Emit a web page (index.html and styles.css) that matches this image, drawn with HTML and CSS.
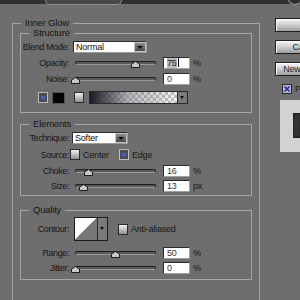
FILE: index.html
```html
<!DOCTYPE html>
<html lang="en">
<head>
    <meta charset="UTF-8">
    <title>Layer Style - Inner Glow</title>
    <link rel="stylesheet" href="styles.css">
</head>
<body>
    <div class="topbar"><span class="tab"></span><span class="knob"></span></div>
    <div class="dialog">
        <div class="group outer">
            <span class="legend">Inner Glow</span>

            <div class="group structure">
                <span class="legend">Structure</span>
                <div class="row r-blend">
                    <span class="label">Blend Mode:</span>
                    <div class="select blend"><span class="select-value">Normal</span><span class="select-btn"></span></div>
                </div>
                <div class="row r-opacity">
                    <span class="label">Opacity:</span>
                    <div class="slider"><span class="track"></span><svg class="thumb" style="left: 56px" width="9" height="7" viewBox="0 0 9 7"><polygon points="0.5,6.5 0.5,3 4.5,0.5 8.5,3 8.5,6.5" /></svg></div>
                    <span class="field"><span class="sel">75</span><span class="caret"></span></span>
                    <span class="unit">%</span>
                </div>
                <div class="row r-noise">
                    <span class="label">Noise:</span>
                    <div class="slider"><span class="track"></span><svg class="thumb" style="left: -4px" width="9" height="7" viewBox="0 0 9 7"><polygon points="0.5,6.5 0.5,3 4.5,0.5 8.5,3 8.5,6.5" /></svg></div>
                    <span class="field">0</span>
                    <span class="unit">%</span>
                </div>
                <div class="row r-swatch">
                    <span class="radio on"></span>
                    <span class="color-swatch"></span>
                    <span class="radio gap"></span>
                    <div class="gradient-pick"><span class="gradient"></span><span class="mini-arrow"></span></div>
                </div>
            </div>

            <div class="group elements">
                <span class="legend">Elements</span>
                <div class="row r-technique">
                    <span class="label">Technique:</span>
                    <div class="select technique"><span class="select-value">Softer</span><span class="select-btn"></span></div>
                </div>
                <div class="row r-source">
                    <span class="label">Source:</span>
                    <span class="choice center"><span class="radio"></span><span>Center</span></span>
                    <span class="choice"><span class="radio on"></span><span>Edge</span></span>
                </div>
                <div class="row r-choke">
                    <span class="label">Choke:</span>
                    <div class="slider"><span class="track"></span><svg class="thumb" style="left: 9px" width="9" height="7" viewBox="0 0 9 7"><polygon points="0.5,6.5 0.5,3 4.5,0.5 8.5,3 8.5,6.5" /></svg></div>
                    <span class="field">16</span>
                    <span class="unit">%</span>
                </div>
                <div class="row r-size">
                    <span class="label">Size:</span>
                    <div class="slider"><span class="track"></span><svg class="thumb" style="left: 4px" width="9" height="7" viewBox="0 0 9 7"><polygon points="0.5,6.5 0.5,3 4.5,0.5 8.5,3 8.5,6.5" /></svg></div>
                    <span class="field">13</span>
                    <span class="unit">px</span>
                </div>
            </div>

            <div class="group quality">
                <span class="legend">Quality</span>
                <div class="row r-contour">
                    <span class="label">Contour:</span>
                    <div class="contour"><span class="curve"></span><span class="mini-arrow"></span></div>
                    <span class="choice anti"><span class="radio"></span><span>Anti-aliased</span></span>
                </div>
                <div class="row r-range">
                    <span class="label">Range:</span>
                    <div class="slider"><span class="track"></span><svg class="thumb" style="left: 36px" width="9" height="7" viewBox="0 0 9 7"><polygon points="0.5,6.5 0.5,3 4.5,0.5 8.5,3 8.5,6.5" /></svg></div>
                    <span class="field">50</span>
                    <span class="unit">%</span>
                </div>
                <div class="row r-jitter">
                    <span class="label">Jitter:</span>
                    <div class="slider"><span class="track"></span><svg class="thumb" style="left: -4px" width="9" height="7" viewBox="0 0 9 7"><polygon points="0.5,6.5 0.5,3 4.5,0.5 8.5,3 8.5,6.5" /></svg></div>
                    <span class="field">0</span>
                    <span class="unit">%</span>
                </div>
            </div>
        </div>

        <div class="side">
            <div class="btn">OK</div>
            <div class="btn">Cancel</div>
            <div class="btn last">New Style...</div>
            <div class="preview-check">
                <span class="check"><svg width="8" height="8" viewBox="0 0 8 8"><path d="M1.5 1.5 L6.5 6.5 M6.5 1.5 L1.5 6.5" /></svg></span>
                <span>Preview</span>
            </div>
            <div class="preview"><span class="preview-chip"></span></div>
        </div>
    </div>
</body>
</html>
```

FILE: styles.css
```css
body {
    margin: 0;
    width: 300px;
    height: 300px;
    overflow: hidden;
    background-color: #6e6e6e;
    font-family: "Liberation Sans", Arial, sans-serif;
    font-size: 9px;
    letter-spacing: -0.2px;
    color: #161616;
}
.topbar {
    position: relative;
    height: 4px;
    background-color: #2f2f2f;
}
.tab {
    position: absolute;
    left: 45px;
    top: 0;
    width: 75px;
    height: 4px;
    border: 1px solid #8e8e8e;
    border-top: none;
    border-radius: 0 0 6px 6px;
    background-color: #474747;
}
.knob {
    position: absolute;
    left: 288px;
    top: -7px;
    width: 12px;
    height: 10px;
    border: 1px solid #9a9a9a;
    border-radius: 50%;
}
.dialog {
    display: flex;
    align-items: flex-start;
    padding: 19px 0 0 12px;
}

/* group boxes */
.group {
    position: relative;
    box-sizing: border-box;
    border: 1px solid #a6a6a6;
}
.legend {
    position: absolute;
    top: -7px;
    left: 8px;
    padding: 0 4px;
    font-size: 9.5px;
    line-height: 12px;
    background-color: #6e6e6e;
    white-space: nowrap;
}
.outer {
    flex: none;
    width: 248px;
    padding: 9px 7px 40px;
}
.outer > .group {
    width: 232px;
}
.structure {
    padding-bottom: 8px;
}
.elements {
    margin-top: 11px;
    padding-bottom: 3px;
}
.quality {
    margin-top: 14px;
    padding-bottom: 5px;
}

/* rows */
.row {
    display: flex;
    align-items: center;
    height: 13px;
    white-space: nowrap;
}
.label {
    flex: none;
    width: 48px;
    margin-right: 4px;
    text-align: right;
    letter-spacing: -0.4px;
}
.r-blend { margin-top: 6px; }
.r-opacity { margin-top: 3px; }
.r-noise { margin-top: 3px; }
.r-swatch { margin-top: 6px; padding-left: 17px; }
.r-technique { margin-top: 6px; }
.r-source { margin-top: 4px; }
.r-source .label { margin-right: 1px; }
.r-choke { margin-top: 3px; }
.r-size { margin-top: 2px; }
.r-contour { margin-top: 6px; height: 24px; }
.r-range { margin-top: 5px; }
.r-jitter { margin-top: 2px; }

/* dropdowns */
.select {
    display: flex;
    box-sizing: border-box;
    height: 12px;
    border: 1px solid #2c2c2c;
    border-right-color: #9c9c9c;
    border-bottom-color: #9c9c9c;
}
.select.blend { width: 74px; }
.select.technique { width: 56px; margin-left: -1px; }
.select-value {
    flex: 1;
    padding-left: 2px;
    line-height: 10px;
    background-color: #fff;
    color: #111;
}
.select-btn {
    position: relative;
    width: 12px;
    box-sizing: border-box;
    border: 1px solid #c4c4c4;
    background: linear-gradient(#8a8a8a, #4c4c4c);
}
.select-btn:after {
    content: "";
    position: absolute;
    left: 2px;
    top: 3px;
    border-left: 3px solid transparent;
    border-right: 3px solid transparent;
    border-top: 3px solid #0c0c0c;
}

/* sliders */
.slider {
    position: relative;
    flex: none;
    width: 81px;
    height: 13px;
    margin-left: 2px;
}
.track {
    display: block;
    box-sizing: border-box;
    margin-top: 5px;
    height: 4px;
    border: 1px solid #1e1e1e;
    border-bottom-color: #9a9a9a;
    border-radius: 2px;
    background-color: #5a5a5a;
}
.thumb {
    position: absolute;
    top: 5px;
}
.thumb polygon {
    fill: #c9c9c9;
    stroke: #1c1c1c;
    stroke-width: 1;
}
.field {
    flex: none;
    display: flex;
    align-items: center;
    box-sizing: border-box;
    width: 27px;
    height: 12px;
    margin-left: 7px;
    padding-left: 3px;
    border: 1px solid #2a2a2a;
    border-right-color: #a0a0a0;
    border-bottom-color: #a0a0a0;
    background-color: #fff;
    color: #333;
}
.sel {
    background-color: #b9b9c4;
    color: #222;
}
.caret {
    width: 1px;
    height: 9px;
    margin-left: 1px;
    background-color: #000;
}
.unit {
    margin-left: 3px;
}

/* radios and swatches */
.radio {
    position: relative;
    flex: none;
    box-sizing: border-box;
    width: 10px;
    height: 11px;
    border: 1px solid #2a2a2a;
    background: linear-gradient(#f2f2f2, #8e8e8e);
}
.radio.on {
    border-color: #bcbcbc;
    background: #4c4c56;
}
.radio.on:after {
    content: "";
    position: absolute;
    left: 2px;
    top: 3px;
    width: 4px;
    height: 3px;
    background-color: #4960c9;
}
.color-swatch {
    flex: none;
    width: 13px;
    height: 12px;
    margin-left: 4px;
    background-color: #050505;
    border: 1px solid #555;
    box-sizing: border-box;
}
.radio.gap {
    margin-left: 9px;
}
.gradient-pick {
    display: flex;
    margin-left: 5px;
    height: 13px;
    border: 1px solid #2a2a2a;
    box-sizing: border-box;
}
.gradient {
    width: 87px;
    background:
        linear-gradient(to right, #1b1a24, rgba(120, 120, 130, 0.5) 45%, rgba(255, 255, 255, 0)),
        repeating-conic-gradient(#bdbdbd 0 25%, #f4f4f4 0 50%) 0 0 / 6px 6px;
}
.mini-arrow {
    position: relative;
    width: 9px;
    border-left: 1px solid #2a2a2a;
    background-color: #7a7a7a;
}
.mini-arrow:after {
    content: "";
    position: absolute;
    left: 2px;
    top: 4px;
    border-left: 2px solid transparent;
    border-right: 2px solid transparent;
    border-top: 3px solid #0a0a0a;
}
.choice {
    flex: none;
    display: flex;
    align-items: center;
    gap: 3px;
}
.choice.center {
    width: 49px;
}

/* contour */
.contour {
    display: flex;
    box-sizing: border-box;
    width: 34px;
    height: 24px;
    margin-left: 1px;
    border: 1px solid #1c1c1c;
}
.curve {
    width: 23px;
    background: linear-gradient(to bottom right, #fff 50%, #777 50%);
}
.contour .mini-arrow:after {
    top: 9px;
}
.choice.anti {
    margin-left: 10px;
}

/* right column */
.side {
    flex: none;
    width: 62px;
    margin: -5px 0 0 15px;
}
.btn {
    box-sizing: border-box;
    height: 14px;
    margin-bottom: 8px;
    border: 1px solid #1f1f1f;
    background: linear-gradient(#f6f6f6, #d2d2d2 45%, #9e9e9e);
    box-shadow: inset 1px 1px 0 #ffffff;
    text-align: center;
    line-height: 12px;
    color: #1a1a1a;
    white-space: nowrap;
}
.btn.last {
    margin-bottom: 7px;
}
.preview-check {
    display: flex;
    align-items: center;
    gap: 3px;
    height: 11px;
    padding-left: 7px;
}
.check {
    display: flex;
    align-items: center;
    justify-content: center;
    box-sizing: border-box;
    width: 10px;
    height: 10px;
    border: 1px solid #2a2a2a;
    background-color: #b8b8c8;
}
.check path {
    stroke: #1c2fa8;
    stroke-width: 1.6;
}
.preview {
    box-sizing: border-box;
    width: 40px;
    height: 52px;
    margin: 6px 0 0 5px;
    padding: 13px 0 0 13px;
    background-color: #d2d2d2;
}
.preview-chip {
    display: block;
    width: 22px;
    height: 25px;
    background: linear-gradient(to right, #3a3a3a, #161616);
    box-shadow: inset 0 0 3px #000;
}
```
